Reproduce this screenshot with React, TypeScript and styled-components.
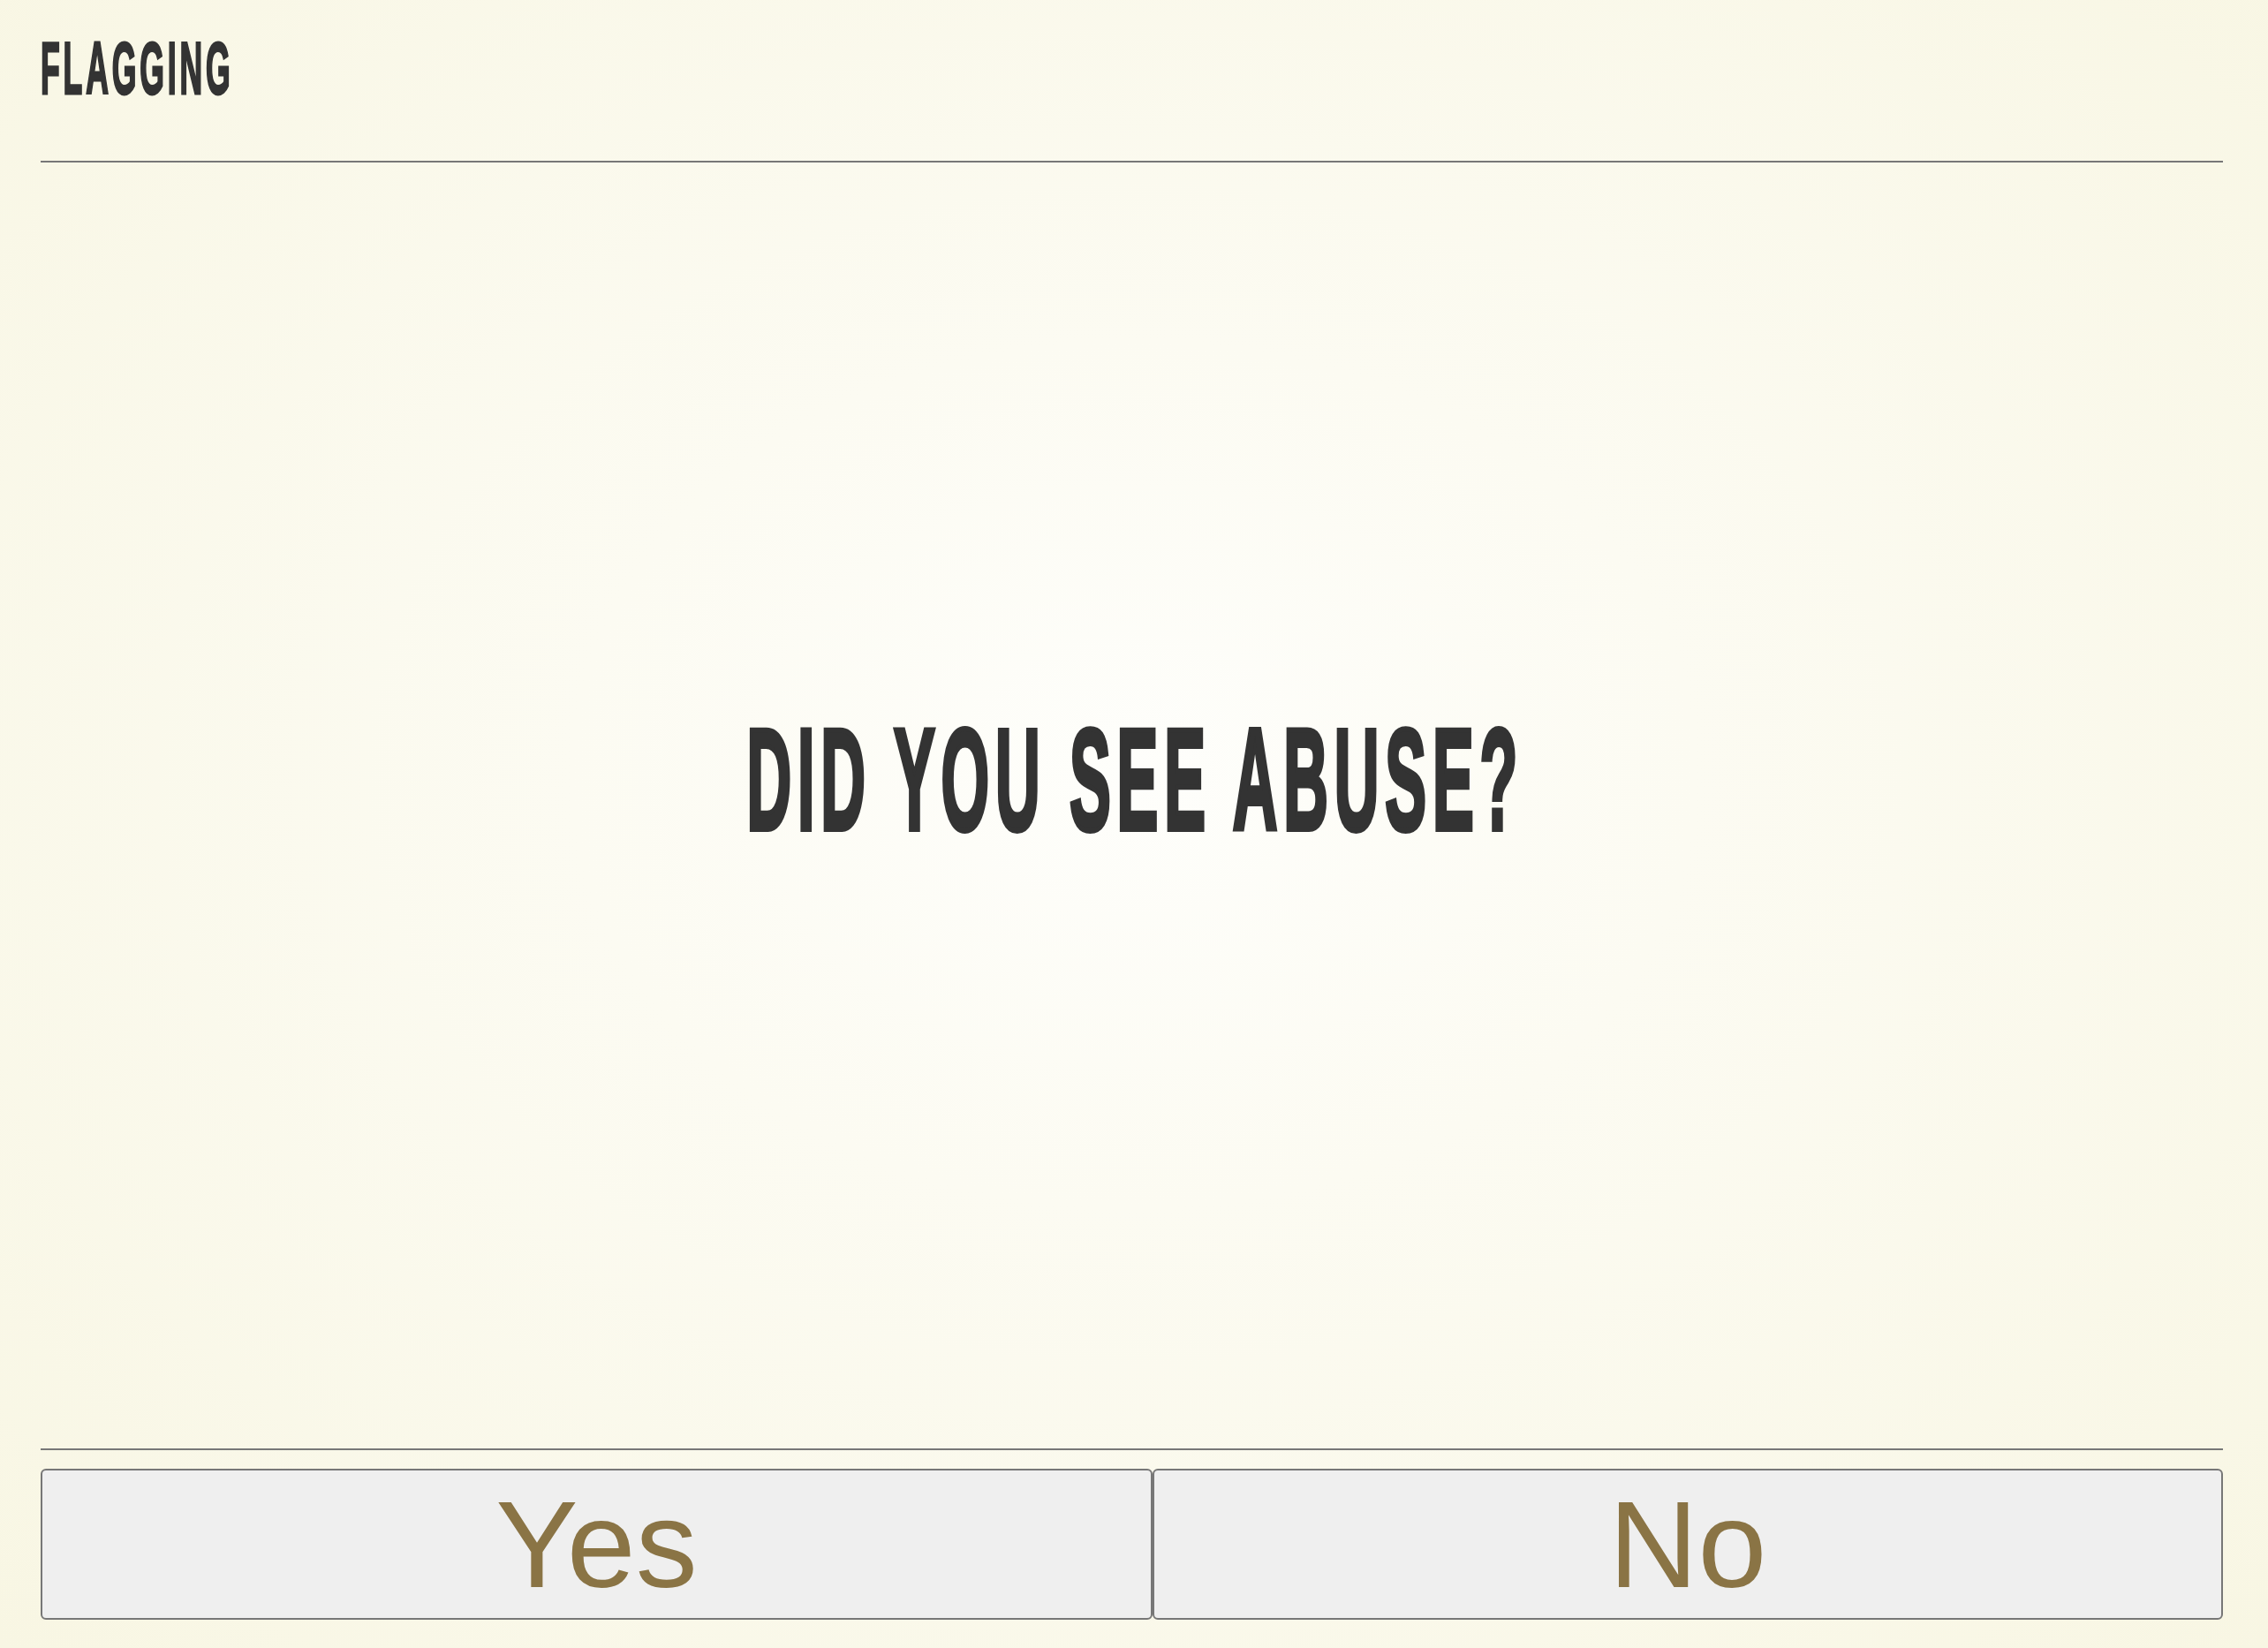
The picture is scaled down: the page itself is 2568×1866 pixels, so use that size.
import React from 'react';
import styled, { createGlobalStyle } from 'styled-components';

const GlobalStyle = createGlobalStyle`
  html, body {
    margin: 0;
    padding: 0;
    height: 100%;
  }

  body {
    background: radial-gradient(ellipse at 50% 47%, #fefefb 0%, #fcfbf2 35%, #f8f6e3 100%);
    font-family: 'Liberation Sans', Arial, sans-serif;
  }

  #root {
    height: 100%;
  }
`;

const Page = styled.div`
  box-sizing: border-box;
  height: 100vh;
  display: flex;
  flex-direction: column;
  padding: 0 51px 32px 46px;
`;

const Header = styled.header`
  box-sizing: border-box;
  height: 184px;
  padding-top: 35px;
  border-bottom: 2px solid #777777;
`;

// condensed gothic look: bold sans squeezed horizontally
const Title = styled.h1`
  margin: 0;
  display: inline-block;
  font-size: 84px;
  line-height: 1;
  font-weight: 700;
  letter-spacing: 9px;
  color: #333333;
  white-space: nowrap;
  transform: scaleX(0.424);
  transform-origin: left center;
  -webkit-text-stroke: 3px #333333;
`;

const Main = styled.main`
  flex: 1;
  display: flex;
  align-items: center;
  justify-content: center;
  padding-bottom: 58px;
`;

const Question = styled.h2`
  margin: 0;
  padding-left: 16px;
  font-size: 164px;
  line-height: 1;
  font-weight: 700;
  letter-spacing: 16px;
  color: #333333;
  white-space: nowrap;
  transform: scaleX(0.428);
  transform-origin: center center;
  -webkit-text-stroke: 6px #333333;
`;

const Footer = styled.footer`
  border-top: 2px solid #777777;
  padding-top: 21px;
`;

const ButtonRow = styled.div`
  display: flex;
`;

const AnswerButton = styled.button<{ $grow: number }>`
  flex: ${(p) => p.$grow} 1 0;
  box-sizing: border-box;
  height: 171px;
  margin: 0;
  padding: 0;
  background: #efefef;
  border: 2px solid #777777;
  border-radius: 6px;
  font-family: 'Liberation Sans', Arial, sans-serif;
  font-size: 140px;
  line-height: 1;
  color: #8a7445;
  cursor: pointer;

  :hover {
    background: #e8e8e8;
  }
`;

const App = () => {
  return (
    <Page>
      <GlobalStyle />
      <Header>
        <Title>FLAGGING</Title>
      </Header>
      <Main>
        <Question>DID YOU SEE ABUSE?</Question>
      </Main>
      <Footer>
        <ButtonRow>
          <AnswerButton $grow={1259}>Yes</AnswerButton>
          <AnswerButton $grow={1212}>No</AnswerButton>
        </ButtonRow>
      </Footer>
    </Page>
  );
};

export default App;
